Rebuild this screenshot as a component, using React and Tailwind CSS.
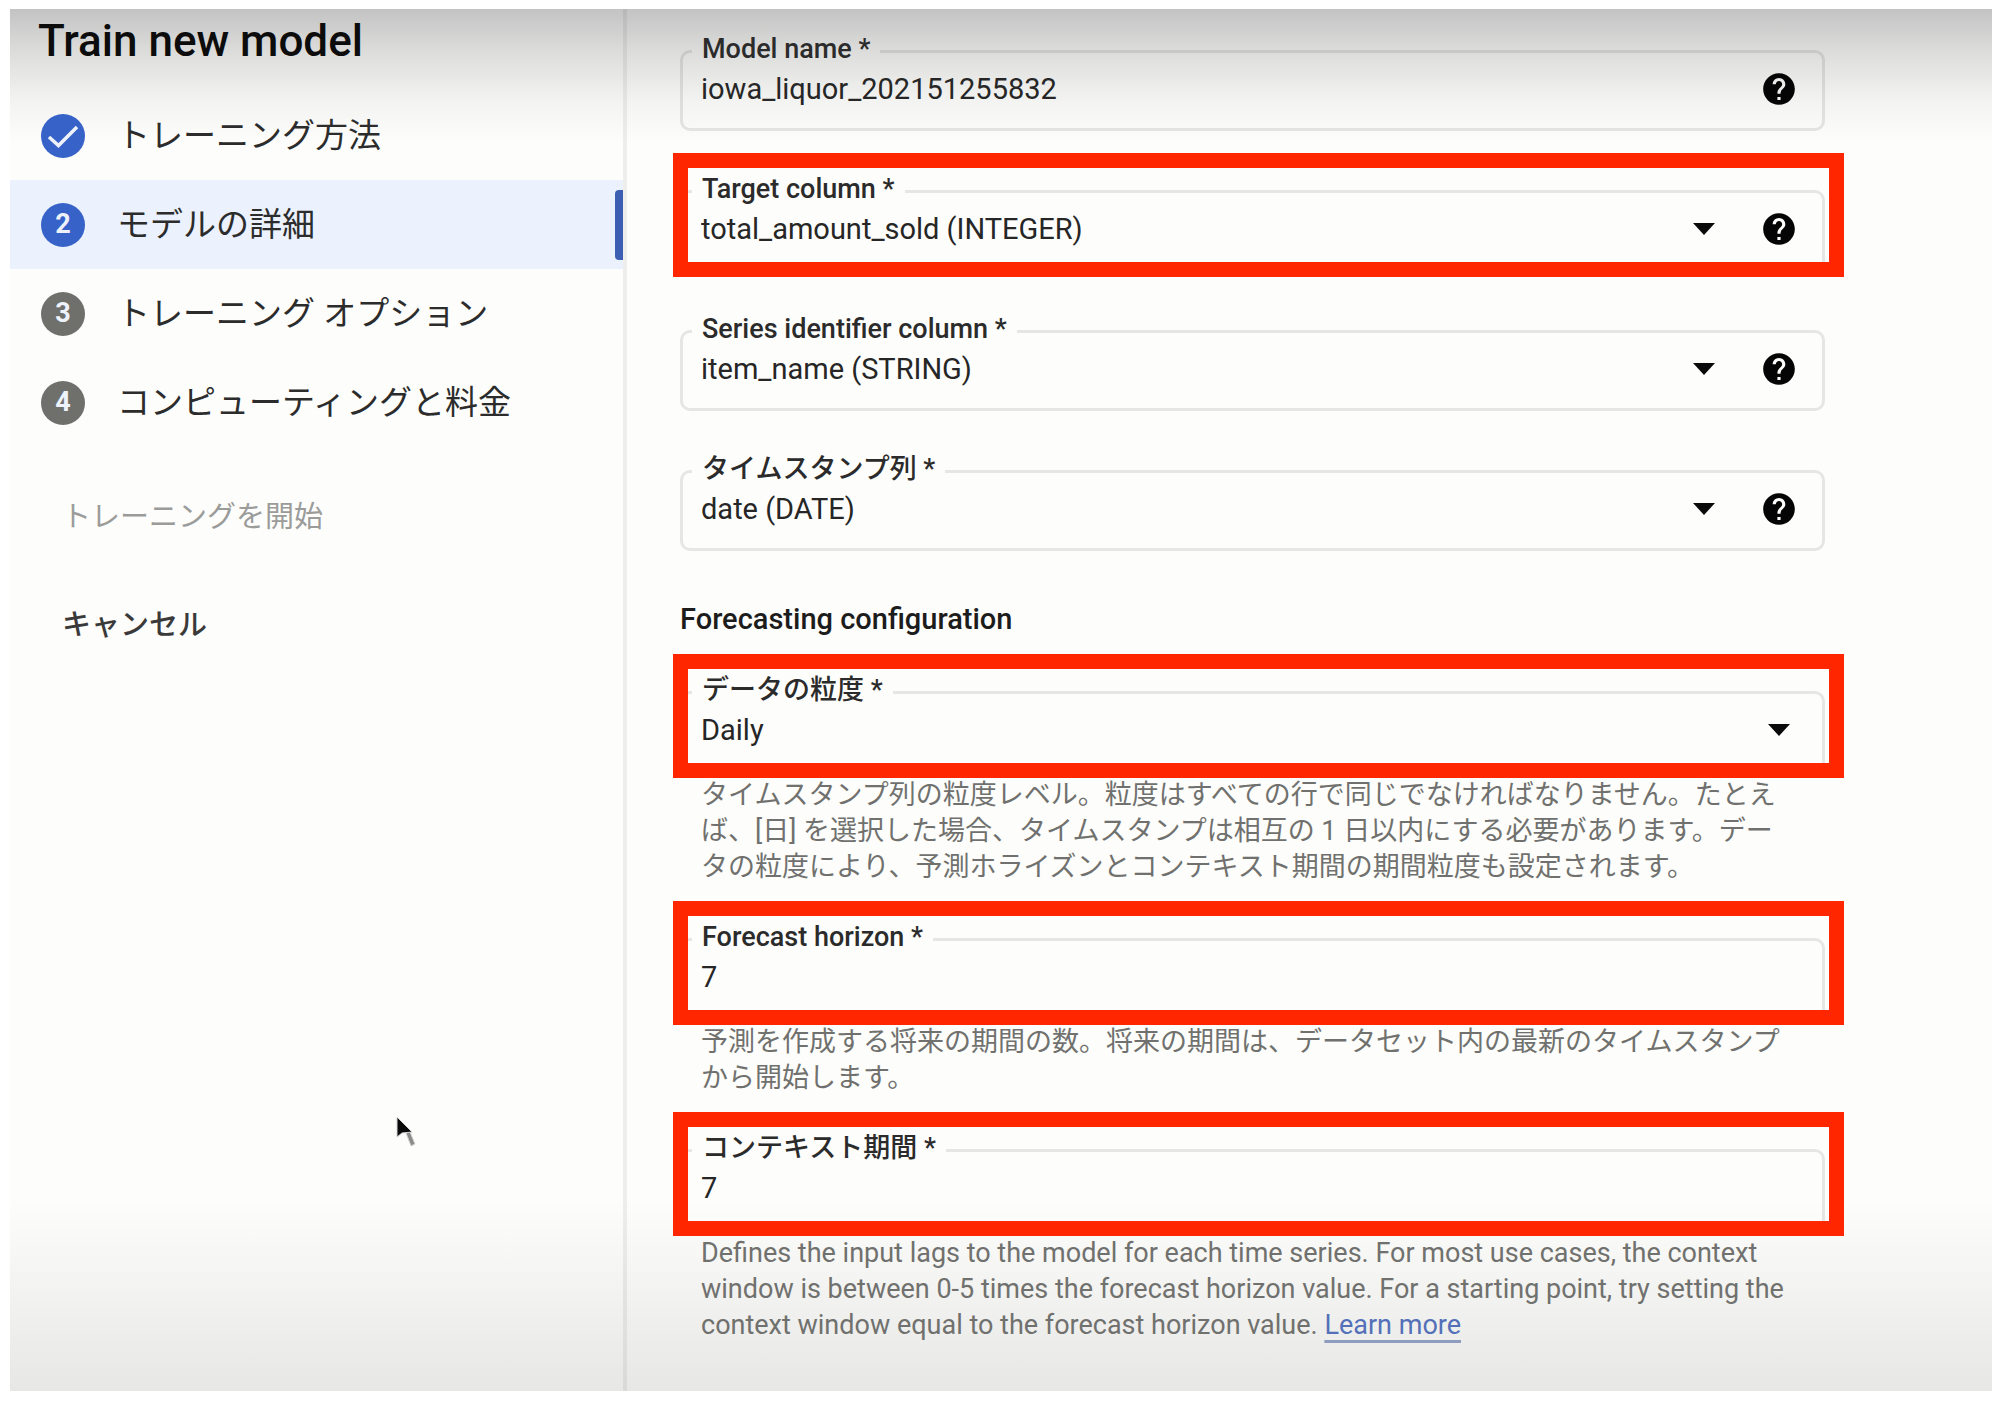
import { MdHelp } from 'react-icons/md';

const steps = [
  { id: 1, label: 'トレーニング方法', state: 'done' },
  { id: 2, label: 'モデルの詳細', state: 'active' },
  { id: 3, label: 'トレーニング オプション', state: 'todo' },
  { id: 4, label: 'コンピューティングと料金', state: 'todo' },
];

function StepBadge({ step }) {
  const color = step.state === 'todo' ? 'bg-[#6f706c]' : 'bg-[#3763c8]';
  return (
    <span className={`flex size-11 shrink-0 items-center justify-center rounded-full text-[27px] font-bold text-[#eef2fb] ${color}`}>
      {step.state === 'done' ? (
        <svg viewBox="0 0 44 44" className="size-11" fill="none" stroke="currentColor" strokeWidth="3.5">
          <path d="M8 23 17.5 31.5 36 13" />
        </svg>
      ) : (
        step.id
      )}
    </span>
  );
}

function Sidebar() {
  return (
    <aside className="w-[617px] shrink-0 border-r-4 border-black/6">
      <h1 className="pb-[18px] pl-7 text-[44px] leading-16 font-medium text-[#0c0c0c]">Train new model</h1>
      <ol>
        {steps.map((step) => (
          <li key={step.id}>
            <a
              href="#"
              aria-current={step.state === 'active' ? 'step' : undefined}
              className={`flex h-[89px] items-center gap-8 pl-[31px] text-[33px] text-[#2c2c2c] ${step.state === 'active' ? 'bg-[#ebf2fd]' : ''}`}
            >
              <StepBadge step={step} />
              {step.label}
              {step.state === 'active' && <span className="ml-auto h-[70px] w-2 rounded-l-sm bg-[#3c5fb4]" />}
            </a>
          </li>
        ))}
      </ol>
      <div className="mt-[46px] flex flex-col items-start gap-[60px] pl-[52px] text-[29px] leading-12">
        <button type="button" disabled className="text-[#9b9c9a]">トレーニングを開始</button>
        <button type="button" className="font-medium text-[#3a3a3a]">キャンセル</button>
      </div>
    </aside>
  );
}

function Caret() {
  return (
    <span className="flex w-[38px] shrink-0 justify-center">
      <svg viewBox="0 0 22 12" className="h-3 w-[22px]" fill="#0a0a0a">
        <path d="M0 0h22L11 12z" />
      </svg>
    </span>
  );
}

// Outlined field, the label sits in the notch of the border
function Field({ id, label, value, type = 'text', help = false, highlight = false, children }) {
  const controlClass = 'min-w-0 flex-1 appearance-none bg-transparent text-[29px] leading-9 text-[#262626] outline-none';
  return (
    <div>
      <div className="relative">
        <fieldset className="rounded-[10px] border-3 border-black/9 px-[9px] pb-[17px]">
          <legend className="px-[10px] pb-1 text-[27px] leading-7 font-medium text-[#2b2b2b]">
            <label htmlFor={id}>{label} *</label>
          </legend>
          <div className="flex h-11 items-center gap-[37px] pr-[15px] pl-[9px]">
            {type === 'select' ? (
              <>
                <select id={id} defaultValue={value} className={controlClass}>
                  <option>{value}</option>
                </select>
                <Caret />
              </>
            ) : (
              <input id={id} type="text" defaultValue={value} className={controlClass} />
            )}
            {help && (
              <button type="button" aria-label={`${label} help`} className="shrink-0">
                <MdHelp className="size-[38px] text-[#050505]" />
              </button>
            )}
          </div>
        </fieldset>
        {highlight && (
          <div className="pointer-events-none absolute -top-[22px] -right-[19px] -bottom-[6px] -left-[7px] border-[15px] border-[#ff2600]" />
        )}
      </div>
      {children && <p className="mt-[5px] pr-[34px] pl-[21px] text-[27px] leading-9 text-[#70716e]">{children}</p>}
    </div>
  );
}

function ModelDetails() {
  return (
    <main className="min-w-0 flex-1 pt-[26px] pr-[167px] pl-[53px]">
      <form>
        <div className="flex flex-col gap-11">
          <Field id="model-name" label="Model name" value="iowa_liquor_202151255832" help />
          <Field id="target" label="Target column" value="total_amount_sold (INTEGER)" type="select" help highlight />
          <Field id="series" label="Series identifier column" value="item_name (STRING)" type="select" help />
          <Field id="timestamp" label="タイムスタンプ列" value="date (DATE)" type="select" help />
        </div>

        <h2 className="mt-[50px] mb-[39px] text-[29px] leading-9 font-medium text-[#1c1c1c]">Forecasting configuration</h2>

        <div className="flex flex-col gap-[38px]">
          <Field id="granularity" label="データの粒度" value="Daily" type="select" highlight>
            タイムスタンプ列の粒度レベル。粒度はすべての行で同じでなければなりません。たとえば、[日] を選択した場合、タイムスタンプは相互の 1 日以内にする必要があります。データの粒度により、予測ホライズンとコンテキスト期間の期間粒度も設定されます。
          </Field>
          <Field id="horizon" label="Forecast horizon" value="7" highlight>
            予測を作成する将来の期間の数。将来の期間は、データセット内の最新のタイムスタンプから開始します。
          </Field>
          <Field id="context" label="コンテキスト期間" value="7" highlight>
            Defines the input lags to the model for each time series. For most use cases, the context window is between 0-5 times the forecast horizon value. For a starting point, try setting the context window equal to the forecast horizon value.{' '}
            <a href="#" className="text-[#5470b8] underline decoration-[#8e9cc0] decoration-3 underline-offset-6">Learn more</a>
          </Field>
        </div>
      </form>
    </main>
  );
}

function Pointer() {
  return (
    <svg viewBox="0 0 24 36" className="pointer-events-none absolute top-[1106px] left-[385px] h-9 w-6" stroke="#d4d4d4" strokeWidth="1">
      <path d="M11 18 15 17 20 29 16 31z" fill="#8a8a8a" />
      <path d="M2 2v20l5-4 10-1z" fill="#0a0a0a" />
    </svg>
  );
}

export default function App() {
  return (
    <div
      lang="ja"
      className="flex min-h-screen bg-white pt-[9px] pr-3 pb-[13px] pl-[10px] font-[Roboto,'Noto_Sans_CJK_JP',sans-serif]"
    >
      <div className="relative flex flex-1 bg-[linear-gradient(to_bottom,#c3c3c3_0px,#dcdcdb_42px,#f3f3f2_92px,#fdfdfb_134px,#fdfdfb_calc(100%-190px),#f2f2f0_calc(100%-95px),#e7e7e5_100%)]">
        <Sidebar />
        <ModelDetails />
        <Pointer />
      </div>
    </div>
  );
}
